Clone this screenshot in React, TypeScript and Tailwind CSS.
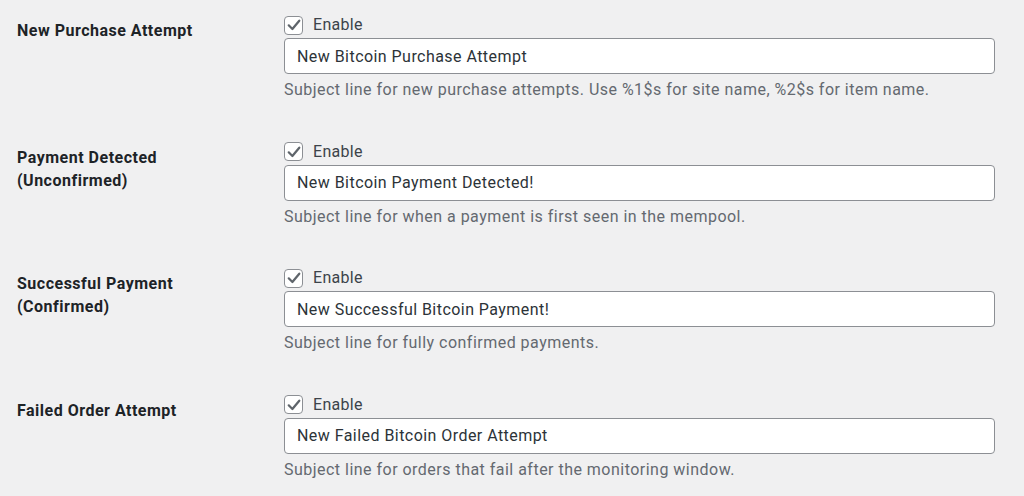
import React from 'react';

type Row = {
  label: string[];
  value: string;
  help: string;
};

const rows: Row[] = [
  {
    label: ['New Purchase Attempt'],
    value: 'New Bitcoin Purchase Attempt',
    help: 'Subject line for new purchase attempts. Use %1$s for site name, %2$s for item name.',
  },
  {
    label: ['Payment Detected', '(Unconfirmed)'],
    value: 'New Bitcoin Payment Detected!',
    help: 'Subject line for when a payment is first seen in the mempool.',
  },
  {
    label: ['Successful Payment', '(Confirmed)'],
    value: 'New Successful Bitcoin Payment!',
    help: 'Subject line for fully confirmed payments.',
  },
  {
    label: ['Failed Order Attempt'],
    value: 'New Failed Bitcoin Order Attempt',
    help: 'Subject line for orders that fail after the monitoring window.',
  },
];

function CheckBox() {
  return (
    <span className="flex h-[19px] w-[19px] items-center justify-center rounded-[4px] border border-[#8c8f94] bg-white">
      <svg viewBox="0 0 20 20" className="h-[16px] w-[16px]">
        <path d="M3.4 10.4 L8 15 L16.6 4.6" fill="none" stroke="#5f656b" strokeWidth="2.8" strokeLinecap="round" strokeLinejoin="round" />
      </svg>
    </span>
  );
}

function SettingRow({ row }: { row: Row }) {
  return (
    <div className="flex h-[126.67px]">
      {/* Label column */}
      <div className="w-[284px] shrink-0 pl-[17px] pt-[19px]">
        {row.label.map((line) => (
          <div key={line} className="text-[16px] font-bold leading-[23px] tracking-[0.5px] text-[#1d2327]">
            {line}
          </div>
        ))}
      </div>

      {/* Field column */}
      <div className="flex w-[711px] flex-col pt-[14px]">
        <label className="flex h-[22px] items-center gap-[10px]">
          <CheckBox />
          <span className="text-[16px] tracking-[0.3px] text-[#3c434a]">Enable</span>
        </label>
        <input
          readOnly
          value={row.value}
          className="mt-[2px] h-[36px] w-full rounded-[4px] border border-[#8c8f94] bg-white px-[12px] text-[16px] tracking-[0.45px] text-[#2c3338] outline-none"
        />
        <p className="mt-[5px] text-[16px] leading-[22px] tracking-[0.48px] text-[#646970]">{row.help}</p>
      </div>
    </div>
  );
}

export default function App() {
  return (
    <div className="h-[496px] w-[1024px] overflow-hidden bg-[#f0f0f1] font-['Roboto',sans-serif]">
      {rows.map((row) => (
        <SettingRow key={row.value} row={row} />
      ))}
    </div>
  );
}
